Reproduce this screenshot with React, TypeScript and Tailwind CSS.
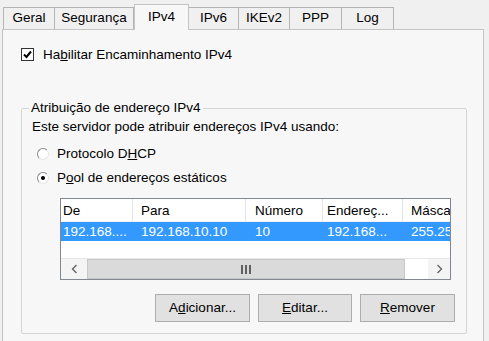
import React from 'react';

const tabs = [
    { label: 'Geral', w: 'w-[52px]' },
    { label: 'Segurança', w: 'w-[80px]' },
    { label: 'IPv4', w: 'w-[55px]', active: true },
    { label: 'IPv6', w: 'w-[51px]' },
    { label: 'IKEv2', w: 'w-[52px]' },
    { label: 'PPP', w: 'w-[53px]' },
    { label: 'Log', w: 'w-[53px]' },
];

function Radio({ checked }: { checked?: boolean }) {
    return (
        <span className="relative flex h-[12px] w-[12px] items-center justify-center rounded-full border border-[#8a8a8a] border-r-[#e6e6e6] border-b-[#e6e6e6] bg-white">
            {checked && <span className="h-[4px] w-[4px] rounded-full bg-black" />}
        </span>
    );
}

export default function App() {
    return (
        <div className="h-[341px] w-[489px] overflow-hidden bg-[#f0f0f0] font-['Liberation_Sans',Arial,sans-serif] text-[13.5px] leading-[16px] text-black">
            {/* Tabs */}
            <div className="flex h-[29px] items-end pl-[3px] pt-[4px]">
                {tabs.map((t) =>
                    t.active ? (
                        <div
                            key={t.label}
                            className={`relative z-10 -mb-px flex h-[26px] ${t.w} items-start justify-center border border-b-0 border-[#c4c4c4] bg-[#f7f7f7] pt-[4px]`}
                        >
                            {t.label}
                        </div>
                    ) : (
                        <div
                            key={t.label}
                            className={`-ml-px flex h-[22px] first:ml-0 ${t.w} items-center justify-center border border-b-0 border-[#b4b4b4] bg-[#f0f0f0] pb-[1px]`}
                        >
                            {t.label}
                        </div>
                    )
                )}
            </div>

            {/* Panel */}
            <div className="ml-[2px] h-[330px] w-[482px] border border-[#c4c4c4] bg-[#f7f7f7] pl-[18px] pt-[18px]">
                <div className="flex h-[13px] items-center gap-[9px]">
                    <span className="flex h-[13px] w-[13px] items-center justify-center border border-[#333] bg-white">
                        <svg width="9" height="9" viewBox="0 0 9 9">
                            <path d="M1 4.5 L3.5 7 L8 1.5" fill="none" stroke="#000" strokeWidth="2" />
                        </svg>
                    </span>
                    <span>
                        Ha<span className="underline">b</span>ilitar Encaminhamento IPv4
                    </span>
                </div>

                {/* Group box */}
                <div className="relative mt-[47px] h-[226px] w-[446px] rounded-[2px] border border-[#d5d5d5]">
                    <span className="absolute left-[7px] top-[-9px] bg-[#f7f7f7] px-[2px]">
                        Atribuição de endereço IPv4
                    </span>

                    <div className="pl-[10px] pt-[10px]">Este servidor pode atribuir endereços IPv4 usando:</div>

                    <div className="mt-[11px] flex h-[16px] items-center gap-[8px] pl-[15px]">
                        <Radio />
                        <span>
                            Protocolo D<span className="underline">H</span>CP
                        </span>
                    </div>
                    <div className="mt-[8px] flex h-[16px] items-center gap-[8px] pl-[15px]">
                        <Radio checked />
                        <span>
                            P<span className="underline">o</span>ol de endereços estáticos
                        </span>
                    </div>

                    {/* List view */}
                    <div className="ml-[38px] mt-[12px] flex h-[82px] w-[391px] flex-col overflow-hidden border border-[#828790] bg-white">
                        <div className="flex h-[23px] shrink-0 items-center overflow-hidden whitespace-nowrap border-b border-[#f0f0f0]">
                            <div className="h-full w-[72px] shrink-0 border-r border-[#e5e5e5] pl-[2px] pt-[4px]">De</div>
                            <div className="h-full w-[113px] shrink-0 border-r border-[#e5e5e5] pl-[8px] pt-[4px]">Para</div>
                            <div className="h-full w-[77px] shrink-0 border-r border-[#e5e5e5] pl-[9px] pt-[4px]">Número</div>
                            <div className="h-full w-[80px] shrink-0 border-r border-[#e5e5e5] pl-[4px] pt-[4px]">Endereç...</div>
                            <div className="h-full min-w-0 flex-1 overflow-hidden pl-[8px] pt-[4px]">Máscara</div>
                        </div>
                        <div className="flex h-[19px] shrink-0 items-center overflow-hidden whitespace-nowrap bg-[#3399ff] text-white">
                            <div className="w-[72px] shrink-0 pl-[2px]">192.168....</div>
                            <div className="w-[113px] shrink-0 pl-[8px]">192.168.10.10</div>
                            <div className="w-[77px] shrink-0 pl-[9px]">10</div>
                            <div className="w-[80px] shrink-0 pl-[4px]">192.168...</div>
                            <div className="min-w-0 flex-1 overflow-hidden pl-[8px]">255.255.255.0</div>
                        </div>
                        <div className="flex-1" />
                        {/* Horizontal scrollbar */}
                        <div className="flex h-[21px] shrink-0 border-t border-[#e8e8e8]">
                            <div className="flex w-[26px] items-center justify-center bg-[#f4f4f4]">
                                <svg width="7" height="10" viewBox="0 0 7 10">
                                    <path d="M5.5 1 L1.5 5 L5.5 9" fill="none" stroke="#606060" strokeWidth="1.3" />
                                </svg>
                            </div>
                            <div className="flex w-[318px] items-center justify-center border border-[#c8c8c8] bg-[#dadada]">
                                <div className="flex gap-[2px]">
                                    <span className="h-[9px] w-[2px] bg-[#606060]" />
                                    <span className="h-[9px] w-[2px] bg-[#606060]" />
                                    <span className="h-[9px] w-[2px] bg-[#606060]" />
                                </div>
                            </div>
                            <div className="w-[23px] bg-white" />
                            <div className="flex flex-1 items-center justify-center bg-[#f4f4f4]">
                                <svg width="7" height="10" viewBox="0 0 7 10">
                                    <path d="M1.5 1 L5.5 5 L1.5 9" fill="none" stroke="#606060" strokeWidth="1.3" />
                                </svg>
                            </div>
                        </div>
                    </div>

                    {/* Buttons */}
                    <div className="mt-[14px] flex gap-[8px] pl-[133px]">
                        <button className="h-[28px] w-[95px] border border-[#adadad] bg-[#e1e1e1]">
                            A<span className="underline">d</span>icionar...
                        </button>
                        <button className="h-[28px] w-[94px] border border-[#adadad] bg-[#e1e1e1]">
                            <span className="underline">E</span>ditar...
                        </button>
                        <button className="h-[28px] w-[95px] border border-[#adadad] bg-[#e1e1e1]">
                            <span className="underline">R</span>emover
                        </button>
                    </div>
                </div>
            </div>
        </div>
    );
}
